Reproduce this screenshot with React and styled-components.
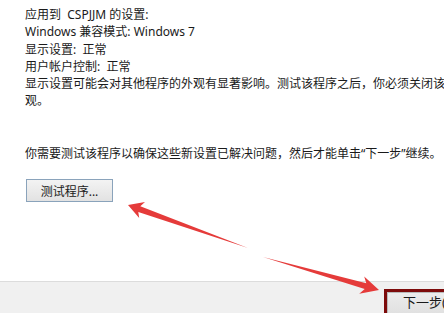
import styled, { createGlobalStyle } from 'styled-components';

const GlobalStyle = createGlobalStyle`
  html, body {
    margin: 0;
    padding: 0;
    background: #ffffff;
  }
  body {
    font-family: "Noto Sans", "Noto Sans CJK SC", sans-serif;
  }
`;

const Window = styled.div`
  position: relative;
  width: 444px;
  height: 313px;
  overflow: hidden;
  display: flex;
  flex-direction: column;
  background: #ffffff;
`;

const Content = styled.div`
  flex: 1;
  padding: 6px 0 0 25px;
  color: #1a1a1a;
  font-size: 12px;
  line-height: 17.3px;
`;

const Line = styled.div`
  white-space: pre;
  margin-top: ${(p) => p.$gap || 0}px;
`;

const TestButton = styled.button`
  display: flex;
  align-items: center;
  justify-content: center;
  width: 87px;
  height: 23px;
  margin: 17px 0 0 1px;
  padding: 0;
  border: 1px solid #8aa3bb;
  background: linear-gradient(#f3f3f3, #e2e2e2);
  color: #202020;
  font-family: inherit;
  font-size: 12px;
`;

const Footer = styled.div`
  height: 32px;
  border-top: 1px solid #dcdcdc;
  background: #f0f0f0;
  display: flex;
  justify-content: flex-end;
  align-items: flex-start;
  padding-top: 7px;
  box-sizing: border-box;
`;

const Highlight = styled.div`
  margin-right: -20px;
  border: 3px solid #7d0b0b;
  border-right: none;
  border-bottom: none;
  width: 80px;
  height: 30px;
  box-sizing: border-box;
`;

const NextButton = styled.div`
  height: 100%;
  background: linear-gradient(#ececec, #dedede);
  border: 1px solid #b9b9b9;
  color: #1a1a1a;
  font-size: 13px;
  line-height: 19px;
  padding-left: 15px;
  box-sizing: border-box;
`;

const Overlay = styled.svg`
  position: absolute;
  left: 0;
  top: 0;
  pointer-events: none;
`;

const Arrows = () => (
  <Overlay width="444" height="313" viewBox="0 0 444 313">
    <polygon
      fill="#e53b3a"
      points="128,205 145,202.1 140.3,206.2 248,248 138.3,211.9 139.2,218.1"
    />
    <polygon
      fill="#e53b3a"
      points="379,290 359.2,293.8 364.7,289.1 263,257 366.3,283.3 364.2,276.4"
    />
  </Overlay>
);

export default function App() {
  return (
    <>
      <GlobalStyle />
      <Window>
        <Content>
          <Line>应用到  CSPJJM 的设置:</Line>
          <Line>Windows 兼容模式: Windows 7</Line>
          <Line>显示设置:  正常</Line>
          <Line>用户帐户控制:  正常</Line>
          <Line>显示设置可能会对其他程序的外观有显著影响。测试该程序之后，你必须关闭该程序才能恢复正常外</Line>
          <Line>观。</Line>
          <Line $gap={35}>你需要测试该程序以确保这些新设置已解决问题，然后才能单击“下一步”继续。</Line>
          <TestButton>测试程序...</TestButton>
        </Content>
        <Footer>
          <Highlight>
            <NextButton>下一步(N)</NextButton>
          </Highlight>
        </Footer>
        <Arrows />
      </Window>
    </>
  );
}
